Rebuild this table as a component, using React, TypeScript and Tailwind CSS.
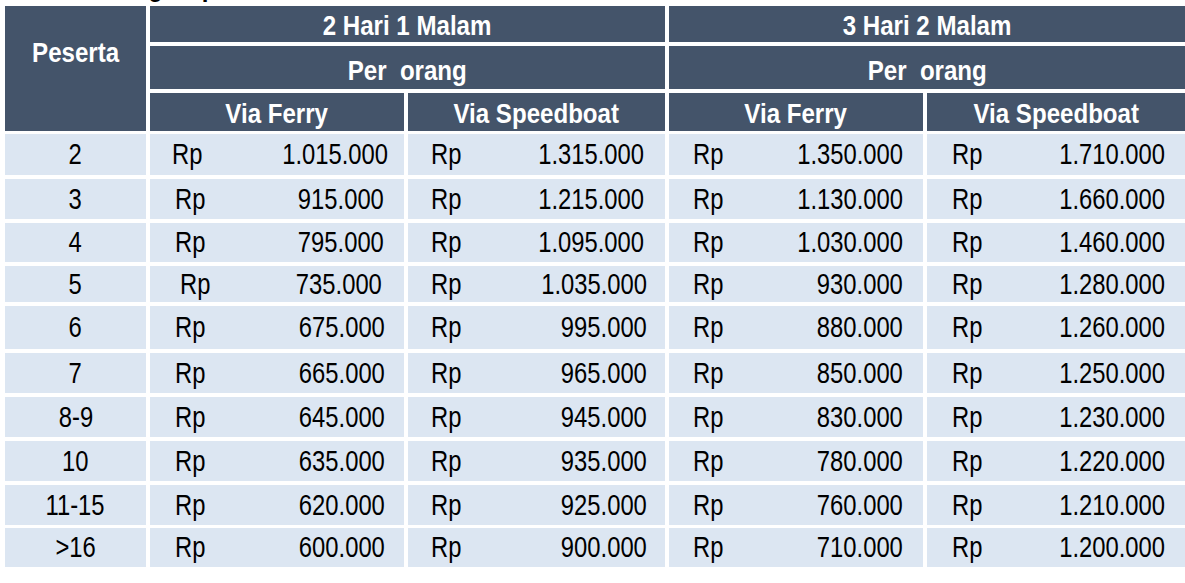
import React from "react";

const rows: string[][] = [
  ["2", "1.015.000", "1.315.000", "1.350.000", "1.710.000"],
  ["3", "915.000", "1.215.000", "1.130.000", "1.660.000"],
  ["4", "795.000", "1.095.000", "1.030.000", "1.460.000"],
  ["5", "735.000", "1.035.000", "930.000", "1.280.000"],
  ["6", "675.000", "995.000", "880.000", "1.260.000"],
  ["7", "665.000", "965.000", "850.000", "1.250.000"],
  ["8-9", "645.000", "945.000", "830.000", "1.230.000"],
  ["10", "635.000", "935.000", "780.000", "1.220.000"],
  ["11-15", "620.000", "925.000", "760.000", "1.210.000"],
  [">16", "600.000", "900.000", "710.000", "1.200.000"],
];

const rowCls = [
  "h-[41px] mt-[3px]",
  "h-[40px] mt-[4px]",
  "h-[39px] mt-[4px]",
  "h-[36px] mt-[4px]",
  "h-[43px] mt-[4px]",
  "h-[40px] mt-[4px]",
  "h-[40px] mt-[4px]",
  "h-[40px] mt-[4px]",
  "h-[40px] mt-[4px]",
  "h-[39px] mt-[3px]",
];

const col1Pad = [
  "pl-[22px] pr-[16px]",
  "pl-[25px] pr-[20px]",
  "pl-[25px] pr-[20px]",
  "pl-[30px] pr-[22px]",
  "pl-[25px] pr-[19px]",
  "pl-[25px] pr-[19px]",
  "pl-[25px] pr-[19px]",
  "pl-[25px] pr-[19px]",
  "pl-[25px] pr-[19px]",
  "pl-[25px] pr-[19px]",
];

const col2Pad = [
  "pl-[23px] pr-[21px]",
  "pl-[23px] pr-[21px]",
  "pl-[23px] pr-[21px]",
  "pl-[23px] pr-[18px]",
  "pl-[23px] pr-[18px]",
  "pl-[23px] pr-[18px]",
  "pl-[23px] pr-[18px]",
  "pl-[23px] pr-[18px]",
  "pl-[23px] pr-[18px]",
  "pl-[23px] pr-[18px]",
];

function L({ children }: { children: React.ReactNode }) {
  return <span className="inline-block whitespace-pre scale-x-[0.82] origin-left">{children}</span>;
}
function R({ children }: { children: React.ReactNode }) {
  return <span className="inline-block whitespace-pre scale-x-[0.82] origin-right">{children}</span>;
}
function C({ children }: { children: React.ReactNode }) {
  return <span className="inline-block whitespace-pre scale-x-[0.82] origin-center">{children}</span>;
}
function H({ children }: { children: React.ReactNode }) {
  return <span className="inline-block whitespace-pre scale-x-[0.86] origin-center">{children}</span>;
}

function PriceCell({ value, cls }: { value: string; cls: string }) {
  return (
    <div className={`flex h-full items-center justify-between bg-[#dce6f2] ${cls}`}>
      <L>Rp</L>
      <R>{value}</R>
    </div>
  );
}

const hd = "bg-[#44546a] flex items-center justify-center";

export default function App() {
  return (
    <div className="w-[1185px] h-[583px] bg-white font-['Liberation_Sans','Arial',sans-serif] text-[29px] leading-none text-black overflow-hidden">
      <div className="h-[6px] overflow-hidden">
        <div className="mt-[-27px] pl-[108px] font-bold text-[28px]">
          <span className="inline-block whitespace-pre scale-x-[0.86] origin-left">Harga Open Tour</span>
        </div>
      </div>
      <div className="pl-[5px]">
        {/* Header */}
        <div className="flex gap-[4px] h-[125px] text-white font-bold text-[28px]">
          <div className="w-[141px] bg-[#44546a] flex justify-center pt-[33px]">
            <H>Peserta</H>
          </div>
          <div className="w-[515px] flex flex-col gap-[4px]">
            <div className={`h-[36px] pt-[3px] ${hd}`}>
              <H>2 Hari 1 Malam</H>
            </div>
            <div className={`h-[43px] pt-[6px] ${hd}`}>
              <H>Per  orang</H>
            </div>
            <div className="h-[38px] flex gap-[4px]">
              <div className={`w-[254px] pt-[4px] ${hd}`}>
                <H>Via Ferry</H>
              </div>
              <div className={`w-[257px] pt-[4px] ${hd}`}>
                <H>Via Speedboat</H>
              </div>
            </div>
          </div>
          <div className="w-[516px] flex flex-col gap-[4px]">
            <div className={`h-[36px] pt-[3px] ${hd}`}>
              <H>3 Hari 2 Malam</H>
            </div>
            <div className={`h-[43px] pt-[6px] ${hd}`}>
              <H>Per  orang</H>
            </div>
            <div className="h-[38px] flex gap-[4px]">
              <div className={`w-[254px] pt-[4px] ${hd}`}>
                <H>Via Ferry</H>
              </div>
              <div className={`w-[258px] pt-[4px] ${hd}`}>
                <H>Via Speedboat</H>
              </div>
            </div>
          </div>
        </div>
        {/* Body */}
        {rows.map((r, i) => (
          <div key={i} className={`flex gap-[4px] ${rowCls[i]}`}>
            <div className="w-[141px] bg-[#dce6f2] flex items-center justify-center">
              <C>{r[0]}</C>
            </div>
            <div className="w-[254px]">
              <PriceCell value={r[1]} cls={col1Pad[i]} />
            </div>
            <div className="w-[257px]">
              <PriceCell value={r[2]} cls={col2Pad[i]} />
            </div>
            <div className="w-[254px]">
              <PriceCell value={r[3]} cls="pl-[24px] pr-[20px]" />
            </div>
            <div className="w-[258px]">
              <PriceCell value={r[4]} cls="pl-[25px] pr-[20px]" />
            </div>
          </div>
        ))}
      </div>
    </div>
  );
}
